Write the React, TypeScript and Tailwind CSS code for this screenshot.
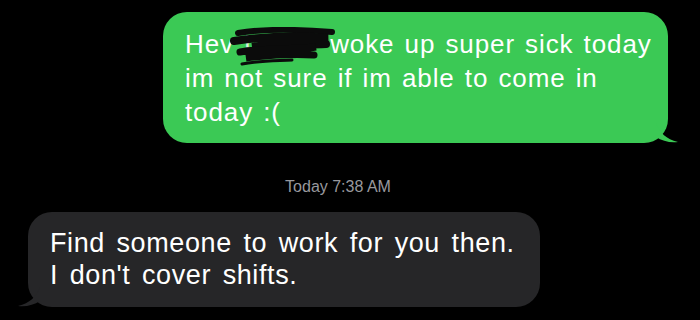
export default function App() {
  return (
    <div className="w-[700px] h-[320px] bg-black overflow-hidden flex flex-col font-['Liberation_Sans',Arial,sans-serif]">
      {/* sent bubble */}
      <div className="flex justify-end pr-[32px] pt-[12px]">
        <div className="relative w-[505px] h-[131px] bg-[#3bc955] rounded-[24px] pl-[22px] pr-[8px] pt-[15px] text-[26px] leading-[34px] tracking-[0.9px] [word-spacing:2px] text-white whitespace-nowrap">
          <p>
            Hev{' '}
            <span className="relative inline-block w-[76px] align-top text-[#d8f3dc]">
              D I
              <svg className="absolute left-[-14px] top-[0px]" width="108" height="42" viewBox="0 0 108 42">
                <path d="M8 6 C 32 2, 64 2, 102 5" stroke="#0b0b0b" strokeWidth="6" fill="none" strokeLinecap="round" />
                <path d="M4 14 C 30 10, 62 8, 98 11 L 22 20 C 46 17, 72 18, 96 17" stroke="#0b0b0b" strokeWidth="8" fill="none" strokeLinecap="round" />
                <path d="M10 25 C 32 21, 56 23, 86 20 L 16 31 C 40 28, 64 27, 84 28" stroke="#0b0b0b" strokeWidth="7" fill="none" strokeLinecap="round" />
                <path d="M12 37 C 27 34, 42 34, 62 33" stroke="#0b0b0b" strokeWidth="3" fill="none" strokeLinecap="round" />
              </svg>
            </span>{' '}
            woke up super sick today
            <br />
            im not sure if im able to come in
            <br />
            today :(
          </p>
          <svg className="absolute right-[-12px] bottom-0" width="24" height="20" viewBox="0 0 24 20">
            <path d="M0 0 C 4 10, 10 16, 22 19 C 14 20, 6 18, 0 14 Z" fill="#3bc955" />
          </svg>
        </div>
      </div>

      {/* timestamp */}
      <div className="mt-[34px] pr-[24px] text-center text-[16px] leading-[20px] text-[#98989d]">
        Today 7:38 AM
      </div>

      {/* received bubble */}
      <div className="pl-[28px] mt-[15px]">
        <div className="relative w-[512px] h-[95px] bg-[#262628] rounded-[24px] pl-[22px] pt-[15px] text-[27px] leading-[32px] tracking-[0.6px] [word-spacing:3.5px] text-white whitespace-nowrap">
          <p>
            Find someone to work for you then.
            <br />
            I don't cover shifts.
          </p>
          <svg className="absolute left-[-12px] bottom-0" width="24" height="20" viewBox="0 0 24 20">
            <path d="M24 0 C 20 10, 14 16, 2 19 C 10 20, 18 18, 24 14 Z" fill="#262628" />
          </svg>
        </div>
      </div>
    </div>
  );
}
